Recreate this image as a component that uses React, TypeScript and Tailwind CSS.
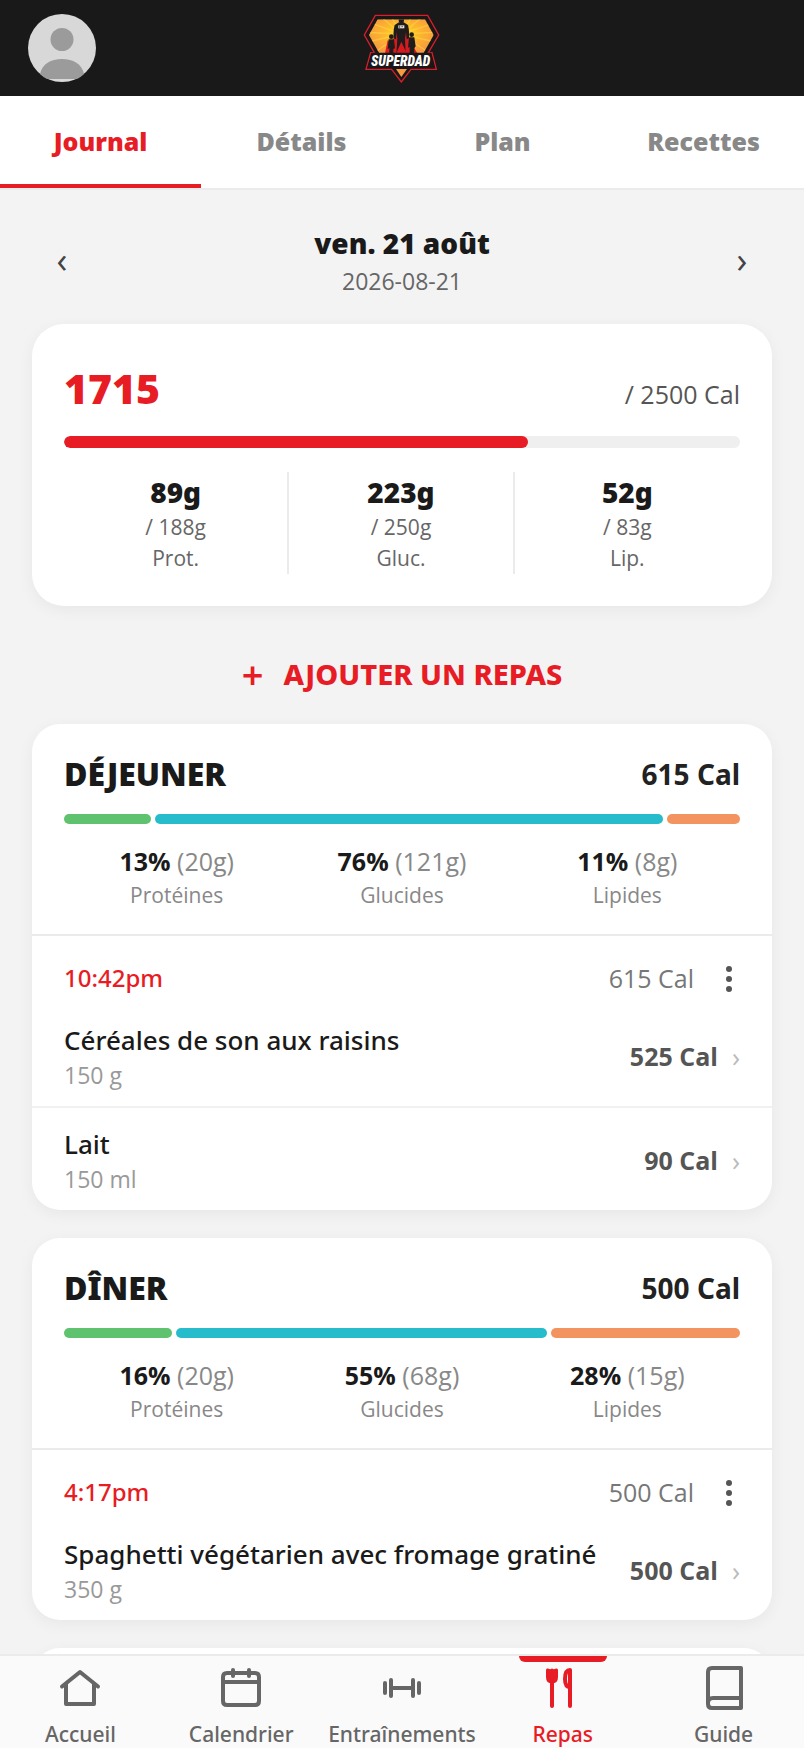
import { useState } from 'react';
import clsx from 'clsx';

interface FoodItem {
  name: string;
  quantity: string;
  calories: number;
}

interface Macro {
  label: string;
  percent: number;
  grams: number;
}

interface Meal {
  title: string;
  calories: number;
  time: string;
  macros: Macro[];
  items: FoodItem[];
}

const tabs = ['Journal', 'Détails', 'Plan', 'Recettes'];

const totals = [
  { label: 'Prot.', value: 89, goal: 188 },
  { label: 'Gluc.', value: 223, goal: 250 },
  { label: 'Lip.', value: 52, goal: 83 },
];

const meals: Meal[] = [
  {
    title: 'DÉJEUNER',
    calories: 615,
    time: '10:42pm',
    macros: [
      { label: 'Protéines', percent: 13, grams: 20 },
      { label: 'Glucides', percent: 76, grams: 121 },
      { label: 'Lipides', percent: 11, grams: 8 },
    ],
    items: [
      { name: 'Céréales de son aux raisins', quantity: '150 g', calories: 525 },
      { name: 'Lait', quantity: '150 ml', calories: 90 },
    ],
  },
  {
    title: 'DÎNER',
    calories: 500,
    time: '4:17pm',
    macros: [
      { label: 'Protéines', percent: 16, grams: 20 },
      { label: 'Glucides', percent: 55, grams: 68 },
      { label: 'Lipides', percent: 28, grams: 15 },
    ],
    items: [{ name: 'Spaghetti végétarien avec fromage gratiné', quantity: '350 g', calories: 500 }],
  },
];

const macroColors = ['bg-[#5fc26e]', 'bg-[#26bccc]', 'bg-[#f3935f]'];

function Logo() {
  return (
    <svg viewBox="42 22 234 210" className="h-[70px] w-[78px]" role="img" aria-label="Superdad">
      <defs>
        <radialGradient id="sun" cx="0.5" cy="0.4" r="0.55">
          <stop offset="0" stopColor="#ffe11c" />
          <stop offset="0.45" stopColor="#fdb92c" />
          <stop offset="1" stopColor="#f79a40" />
        </radialGradient>
        <clipPath id="shield">
          <path d="M86 41H228L254 88L222 145H92L60 88Z" />
        </clipPath>
      </defs>
      <path
        d="M79 29H236L269 88L238 141H249L262 191H186L157 229L128 191H51L65 141H76L46 88Z"
        fill="#1a1718"
        stroke="#d81f2a"
        strokeWidth="4"
      />
      <g clipPath="url(#shield)">
        <rect x="56" y="38" width="202" height="110" fill="url(#sun)" />
        <g stroke="#ffd84a" strokeWidth="4" opacity="0.55">
          <path d="M157 85L60 50M157 85L92 30M157 85L125 30M157 85L190 30M157 85L225 30M157 85L262 50M157 85L262 80M157 85L262 110M157 85L52 80M157 85L52 110M157 85L70 145M157 85L245 145" />
        </g>
        <path d="M139 78Q133 110 107 147H208Q183 110 174 78Z" fill="#d71920" />
        <path d="M116 104L107 147H128L132 112Z" fill="#e01b22" />
        <g fill="#211c1c">
          <ellipse cx="157" cy="43" rx="8" ry="10" />
          <path d="M150 50H164L177 58Q182 76 180 98L173 101L171 80L168 98L170 147H165L157 116L150 147H142L145 98L142 80L141 101L134 98Q132 74 137 58Z" />
          <circle cx="127" cy="93" r="7" />
          <path d="M119 101H135L138 128L133 130V147H121V128L116 130Z" />
          <circle cx="188" cy="87" r="7" />
          <path d="M180 95H196L200 122L196 128L195 147H182V124L177 126Z" />
        </g>
        <path d="M157 108L140 147H175Z" fill="#d71920" />
        <rect x="148" y="59" width="18" height="9" fill="#e8e3dc" />
        <path d="M152 59V68M157 63H162" stroke="#211c1c" strokeWidth="2" />
      </g>
      <path d="M68 141H246L258 187H55Z" fill="#1a1718" />
      <path d="M141 190H174L157 214Z" fill="#f79a40" />
      <text
        x="155"
        y="180"
        textAnchor="middle"
        fill="#fff"
        fontFamily="'Roboto Condensed', Roboto, 'Liberation Sans', sans-serif"
        fontSize="41"
        fontWeight="900"
        fontStyle="italic"
      >
        SUPERDAD
      </text>
    </svg>
  );
}

function Avatar() {
  return (
    <svg viewBox="0 0 68 68" className="size-full">
      <circle cx="34" cy="34" r="34" fill="#d8d8d8" />
      <circle cx="34" cy="25.5" r="11.5" fill="#9b9b9b" />
      <path d="M12 60C14 50 23 45 34 45S54 50 56 60Q53 63 49 65H19Q15 63 12 60Z" fill="#9b9b9b" />
    </svg>
  );
}

function SummaryCard() {
  const eaten = 1715;
  const goal = 2500;

  return (
    <section className="rounded-[32px] bg-white p-8 shadow-[0_4px_16px_rgba(0,0,0,0.05)]">
      <div className="flex h-[60px] items-baseline justify-between">
        <span className="font-['Noto_Sans',sans-serif] text-[41px] leading-[64px] font-black text-[#e81c24]">{eaten}</span>
        <span className="text-[25px] text-[#555]">/ {goal} Cal</span>
      </div>
      <div className="mt-5 h-3 overflow-hidden rounded-full bg-[#efefef]">
        <div className="h-full rounded-full bg-[#e81c24]" style={{ width: `${(eaten / goal) * 100}%` }} />
      </div>
      <div className="mt-6 grid grid-cols-3 divide-x-2 divide-[#ebebeb] text-center">
        {totals.map((total) => (
          <div key={total.label} className="text-[21px] leading-[31px] text-[#666]">
            <div className="font-['Noto_Sans',sans-serif] text-[28px] leading-[40px] font-black text-[#1a1a1a]">
              {total.value}g
            </div>
            <div>/ {total.goal}g</div>
            <div>{total.label}</div>
          </div>
        ))}
      </div>
    </section>
  );
}

function MealCard({ meal }: { meal: Meal }) {
  return (
    <section className="overflow-hidden rounded-[28px] bg-white shadow-[0_4px_16px_rgba(0,0,0,0.05)]">
      <div className="border-b-2 border-[#ebebeb] px-8 pt-6.5 pb-5.5">
        <div className="flex h-12 items-center justify-between font-['Noto_Sans',sans-serif]">
          <h2 className="text-[32px] font-black text-[#1a1a1a]">{meal.title}</h2>
          <span className="text-[28px] font-bold text-[#222]">{meal.calories} Cal</span>
        </div>
        <div className="mt-4 flex gap-1">
          {meal.macros.map((macro, index) => (
            <div
              key={macro.label}
              className={clsx('h-2.5 basis-0 rounded-full', macroColors[index])}
              style={{ flexGrow: macro.percent }}
            />
          ))}
        </div>
        <div className="mt-5 grid grid-cols-3 text-center text-[#888]">
          {meal.macros.map((macro) => (
            <div key={macro.label}>
              <div className="text-[25px] leading-[34px]">
                <span className="font-bold text-[#1a1a1a]">{macro.percent}%</span> ({macro.grams}g)
              </div>
              <div className="text-[21px] leading-[34px]">{macro.label}</div>
            </div>
          ))}
        </div>
      </div>

      <div className="flex items-center px-8 pt-[22px] pb-1.5 leading-10">
        <span className="grow font-['Noto_Sans',sans-serif] text-[24px] font-medium text-[#e81c24]">{meal.time}</span>
        <span className="text-[25px] text-[#777]">{meal.calories} Cal</span>
        <button type="button" aria-label="Options du repas" className="ml-6 flex h-10 w-[22px] items-center justify-center">
          <svg viewBox="0 0 8 40" className="h-10 w-2" fill="#555">
            <circle cx="4" cy="11" r="3" />
            <circle cx="4" cy="21" r="3" />
            <circle cx="4" cy="31" r="3" />
          </svg>
        </button>
      </div>

      <ul className="divide-y-2 divide-[#f1f1f1]">
        {meal.items.map((item) => (
          <li key={item.name}>
            <button type="button" className="flex w-full items-center px-8 pt-[18px] pb-3.5 text-left">
              <span className="grow">
                <span className="block font-['Noto_Sans',sans-serif] text-[26px] leading-9 font-medium text-[#1a1a1a]">
                  {item.name}
                </span>
                <span className="block text-[23px] leading-[34px] text-[#999]">{item.quantity}</span>
              </span>
              <span className="text-[25px] font-bold text-[#555]">{item.calories} Cal</span>
              <span className="ml-3.5 text-[27px] leading-9 text-[#bbb]">›</span>
            </button>
          </li>
        ))}
      </ul>
    </section>
  );
}

const navItems = [
  {
    label: 'Accueil',
    icon: <path d="M4 20.500L22 6L40 20.500M8 18V38H36V18" />,
  },
  {
    label: 'Calendrier',
    icon: <path d="M8 7H36Q40 7 40 11V35Q40 39 36 39H8Q4 39 4 35V11Q4 7 8 7ZM4 16H40M14 4V10M30 4V10" />,
  },
  {
    label: 'Entraînements',
    icon: <path d="M12 22H32M11 14V30M33 14V30M5 17V27M39 17V27" />,
  },
  {
    label: 'Repas',
    icon: (
      <>
        <path d="M6.500 4V11Q6.500 16 11 16Q15.500 16 15.500 11V4L13 5L11 4L9 5Z" fill="currentColor" strokeWidth="3" />
        <path d="M11 14V40M29 40V4Q24 4 24 13Q24 21 29 21" />
      </>
    ),
  },
  {
    label: 'Guide',
    icon: <path d="M39 2H10Q6 2 6 6V38Q6 42 10 42H39ZM39 32H11Q6 32 6 37" />,
  },
];

export default function App() {
  const [activeTab, setActiveTab] = useState('Journal');
  const [activePage, setActivePage] = useState('Repas');

  return (
    <div className="flex h-screen flex-col bg-[#f3f3f3] font-['Open_Sans','Noto_Sans',sans-serif]">
      <header className="grid h-24 shrink-0 grid-cols-3 items-center bg-[#191919] px-7">
        <button type="button" aria-label="Profil" className="size-[68px] rounded-full">
          <Avatar />
        </button>
        <div className="flex justify-center">
          <Logo />
        </div>
      </header>

      <nav className="grid shrink-0 grid-cols-4 border-b-2 border-[#ebebeb] bg-white">
        {tabs.map((tab) => (
          <button
            key={tab}
            type="button"
            onClick={() => setActiveTab(tab)}
            className={clsx(
              "h-[92px] border-y-4 border-t-transparent font-['Noto_Sans',sans-serif] text-[25px] font-black",
              tab === activeTab ? 'border-b-[#e81c24] text-[#e81c24]' : 'border-b-transparent text-[#888]'
            )}
          >
            {tab}
          </button>
        ))}
      </nav>

      <main className="grow overflow-y-auto px-8 pt-8 [scrollbar-width:none]">
        <div className="mb-6.5 flex items-center justify-between px-5 text-center">
          <button type="button" aria-label="Jour précédent" className="w-5 text-[36px] text-[#444]">‹</button>
          <div>
            <h1 className="font-['Noto_Sans',sans-serif] text-[28px] leading-[42px] font-black text-[#1a1a1a]">
              ven. 21 août
            </h1>
            <p className="text-[23px] leading-[34px] text-[#666]">2026-08-21</p>
          </div>
          <button type="button" aria-label="Jour suivant" className="w-5 text-[36px] text-[#444]">›</button>
        </div>

        <SummaryCard />

        <button
          type="button"
          className="mt-11 mb-6.5 flex h-12 w-full items-center justify-center gap-5 font-['Noto_Sans',sans-serif] text-[29px] font-extrabold text-[#e81c24]"
        >
          <span className="text-[38px] font-semibold">+</span>
          AJOUTER UN REPAS
        </button>

        <div className="flex flex-col gap-7">
          {meals.map((meal) => (
            <MealCard key={meal.title} meal={meal} />
          ))}
          <section className="h-24 rounded-[28px] bg-white shadow-[0_4px_16px_rgba(0,0,0,0.05)]" />
        </div>
      </main>

      <nav className="grid h-[94px] shrink-0 grid-cols-5 border-t-2 border-[#ebebeb] bg-[#fafafa]">
        {navItems.map(({ label, icon }) => {
          const active = label === activePage;
          return (
            <button
              key={label}
              type="button"
              onClick={() => setActivePage(label)}
              className={clsx('relative flex flex-col items-center pt-2.5', active ? 'text-[#e81c24]' : 'text-[#666]')}
            >
              {active && <span className="absolute top-0 h-1.5 w-22 rounded-b-md bg-[#e81c24]" />}
              <svg
                viewBox="0 0 44 44"
                className="size-11"
                fill="none"
                stroke="currentColor"
                strokeWidth="4"
                strokeLinecap="round"
                strokeLinejoin="round"
              >
                {icon}
              </svg>
              <span className="mt-2.5 font-['Noto_Sans',sans-serif] text-[21px] leading-7 font-medium">{label}</span>
            </button>
          );
        })}
      </nav>
    </div>
  );
}
